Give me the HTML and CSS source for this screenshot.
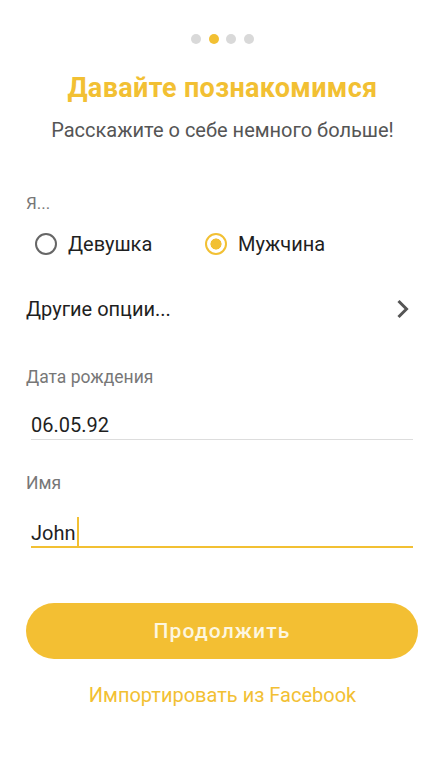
FILE: index.html
```html
<!DOCTYPE html>
<html lang="ru">
<head>
<meta charset="utf-8">
<link rel="stylesheet" href="styles.css">
</head>
<body>
<div class="screen">
  <div class="dots">
    <span class="dot"></span><span class="dot active"></span><span class="dot"></span><span class="dot"></span>
  </div>
  <h1 class="title">Давайте познакомимся</h1>
  <p class="subtitle">Расскажите о себе немного больше!</p>

  <div class="label label-me">Я...</div>
  <div class="radios">
    <div class="radio"><span class="circle"></span><span class="radio-text">Девушка</span></div>
    <div class="radio checked"><span class="circle"></span><span class="radio-text">Мужчина</span></div>
  </div>

  <div class="options">
    <span>Другие опции...</span>
    <svg class="chev" width="14" height="22" viewBox="0 0 14 22"><path d="M2.5 3 L10.5 11 L2.5 19" fill="none" stroke="#555" stroke-width="3"/></svg>
  </div>

  <div class="label label-date">Дата рождения</div>
  <div class="field">06.05.92</div>

  <div class="label label-name">Имя</div>
  <div class="field focused">John<span class="caret"></span></div>

  <button class="btn">Продолжить</button>
  <div class="fb">Импортировать из Facebook</div>
</div>
</body>
</html>
```
FILE: styles.css
```css
* { box-sizing: border-box; }
html, body { margin: 0; padding: 0; background: #fff; }
body { font-family: Roboto, "Noto Sans", sans-serif; color: #1f1f1f; }
.screen { width: 445px; height: 766px; padding: 34px 26px 0 26px; }
.dots { display: flex; justify-content: center; gap: 7.5px; }
.dot { width: 10px; height: 10px; border-radius: 50%; background: #d9d9d9; }
.dot.active { background: #f2c033; }
.title { margin: 27px 0 0; text-align: center; font-size: 27px; font-weight: 700; color: #f2c033; line-height: 34px; letter-spacing: 0.35px; }
.subtitle { margin: 12px 0 0; text-align: center; font-size: 20px; color: #555; line-height: 26px; }
.label { font-size: 17px; color: #777; line-height: 22px; }
.label-me { margin-top: 49px; }
.radios { display: flex; margin-top: 17px; padding-left: 9px; }
.radio { display: flex; align-items: center; gap: 11px; font-size: 20px; color: #1f1f1f; line-height: 26px; }
.radio:first-child { width: 170px; }
.circle { width: 22px; height: 22px; border-radius: 50%; border: 2.5px solid #666; flex: none; }
.radio.checked .circle { border-color: #f2c033; background: radial-gradient(circle, #f2c033 0 5.3px, #fff 5.8px); }
.options { display: flex; justify-content: space-between; align-items: center; margin-top: 39px; font-size: 20px; color: #1f1f1f; line-height: 26px; padding-right: 9px; }
.chev { display: block; }
.label-date { margin-top: 44px; font-size: 17.5px; }
.field { margin: 24px 6px 0 5px; font-size: 20px; line-height: 26px; color: #1f1f1f; padding-bottom: 1px; border-bottom: 1px solid #ddd; display: flex; align-items: flex-end; }
.field.focused { border-bottom: 2px solid #f2c033; padding-bottom: 0; margin-top: 26px; }
.label-name { margin-top: 32px; font-size: 17.5px; }
.caret { display: block; width: 2px; height: 29px; margin-top: -3px; background: #f2c033; margin-left: 1px; }
.btn { display: block; width: 392px; height: 56px; margin-top: 55px; border: none; border-radius: 28px; background: #f3bf33; color: #fdf6df; font-family: Roboto, "Noto Sans", sans-serif; font-size: 21px; font-weight: 500; letter-spacing: 1.1px; padding: 0; }
.fb { margin-top: 23px; text-align: center; font-size: 20px; color: #f2c033; line-height: 26px; }
```
